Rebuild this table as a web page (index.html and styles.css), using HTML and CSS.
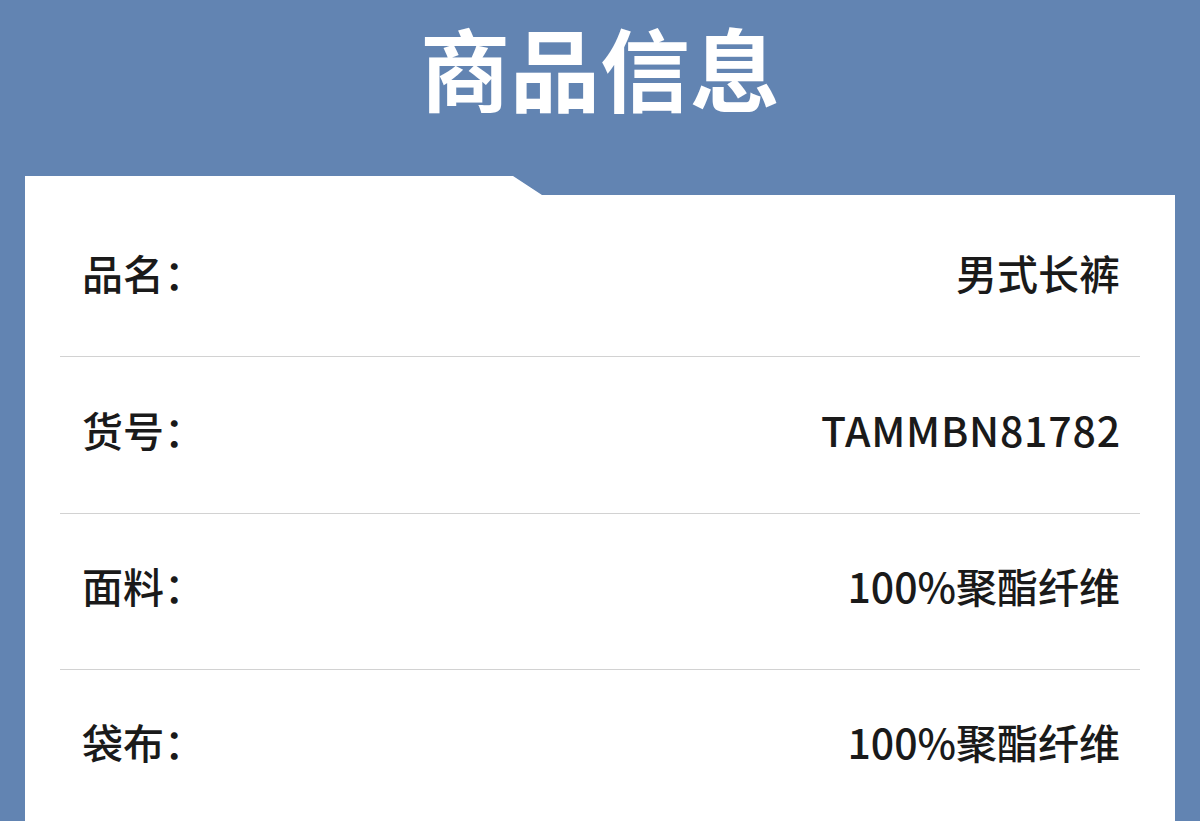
FILE: index.html
```html
<!DOCTYPE html>
<html lang="zh-CN">
<head>
<meta charset="utf-8">
<link rel="stylesheet" href="styles.css">
</head>
<body>
<div class="page">
  <header class="header"><h1 class="title">商品信息</h1></header>
  <section class="card">
    <div class="row"><span class="label">品名：</span><span class="value">男式长裤</span></div>
    <div class="row"><span class="label">货号：</span><span class="value value-code">TAMMBN81782</span></div>
    <div class="row"><span class="label">面料：</span><span class="value">100%聚酯纤维</span></div>
    <div class="row"><span class="label">袋布：</span><span class="value">100%聚酯纤维</span></div>
  </section>
</div>
</body>
</html>
```
FILE: styles.css
```css
html, body {
  margin: 0;
  padding: 0;
  background: #6284b2;
  font-family: "Noto Sans CJK SC", "Noto Sans", sans-serif;
  overflow: hidden;
}
.page {
  width: 1200px;
  height: 821px;
  overflow: hidden;
}
.header {
  height: 176px;
  display: flex;
  justify-content: center;
  align-items: flex-start;
}
.title {
  margin: 10px 0 0;
  font-size: 90px;
  font-weight: 700;
  color: #ffffff;
  line-height: 112px;
}
.card {
  margin: 0 25px;
  background: #ffffff;
  padding: 24px 35px 0;
  height: 700px;
  clip-path: polygon(0 0, 488px 0, 517px 19px, 100% 19px, 100% 100%, 0 100%);
}
.row {
  height: 157px;
  box-sizing: border-box;
  border-bottom: 1px solid #d2d2d2;
  display: flex;
  justify-content: space-between;
  align-items: center;
  padding: 0 20px 0 22px;
  font-size: 41px;
  font-weight: 500;
  color: #1a1a1a;
}
.row:nth-child(n+3) {
  height: 156px;
}
.label, .value {
  line-height: 1;
  margin-top: -12px;
}
.value-code {
  letter-spacing: 0.8px;
  margin-right: -0.8px;
}
```
